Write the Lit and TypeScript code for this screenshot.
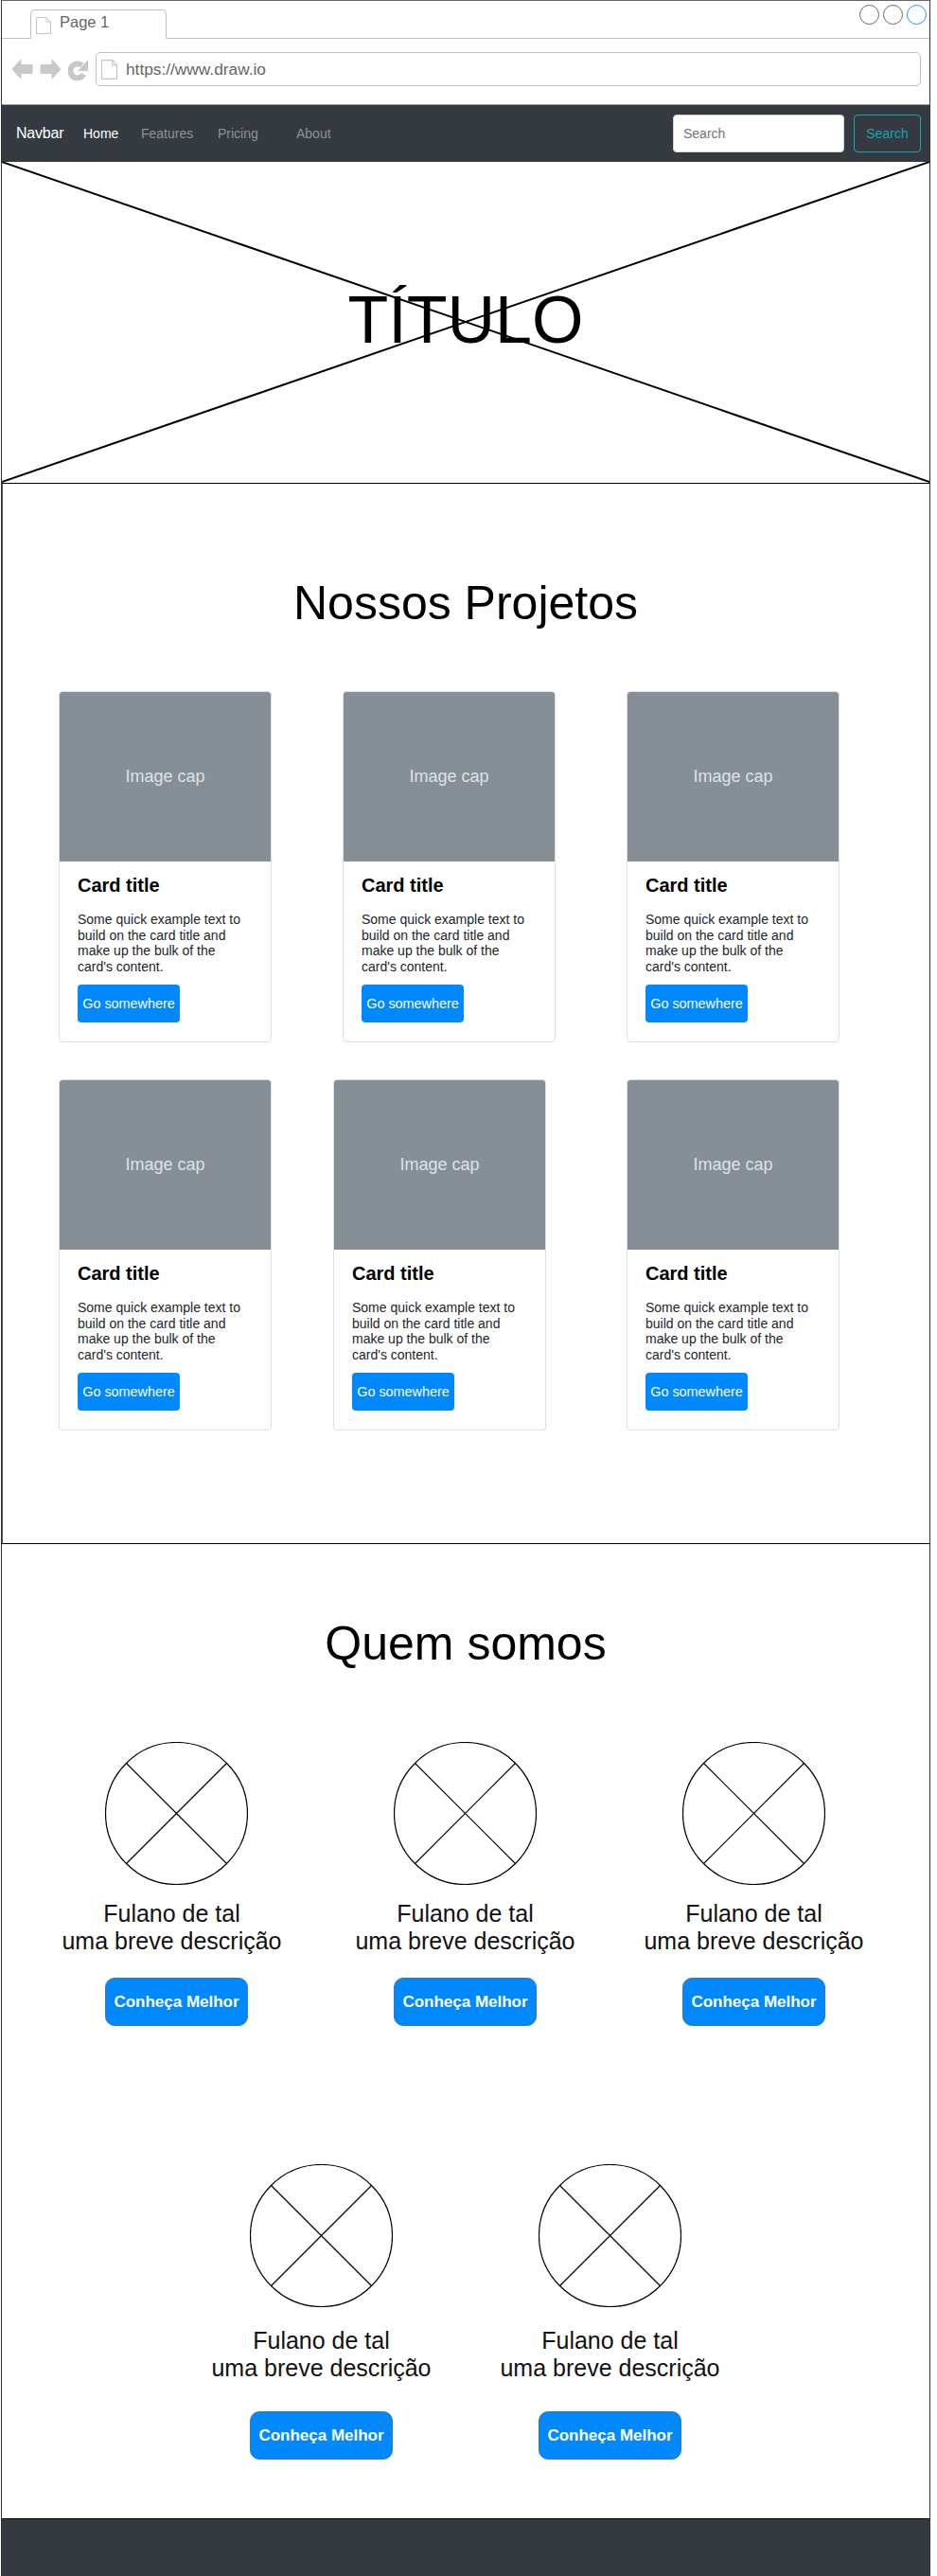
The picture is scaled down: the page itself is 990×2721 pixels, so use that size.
import { LitElement, html, css, svg } from 'lit';
import { customElement } from 'lit/decorators.js';

const docIcon = (w: number, h: number) => svg`
  <svg class="doc" width=${w} height=${h} viewBox="0 0 16 18" fill="#fff" stroke="#c4c4c4" stroke-width="1" preserveAspectRatio="none">
    <path d="M.5.5h10.5l4.500 4.500v12.500h-15z" />
    <path d="M11 .5v4.500h4.500" fill="none" />
  </svg>`;

@customElement('app-root')
export class AppRoot extends LitElement {
  static styles = css`
    :host {
      display: block;
      width: 990px;
      height: 2721px;
      background: #fff;
      font-family: 'Liberation Sans', Arial, sans-serif;
      color: #000;
    }
    .frame {
      width: 982px;
      margin-left: 1px;
      box-sizing: border-box;
      border: 1px solid #333;
      border-bottom: none;
      border-top-color: #666;
    }

    /* browser chrome */
    .tabs {
      height: 40px;
      box-sizing: border-box;
      display: flex;
      justify-content: space-between;
      align-items: flex-start;
      border-bottom: 1px solid #c0c0c0;
      padding: 9px 3px 0 30px;
    }
    .tab {
      width: 144px;
      height: 31px;
      box-sizing: border-box;
      display: flex;
      align-items: center;
      gap: 9px;
      padding: 0 0 4px 5px;
      border: 1px solid #c0c0c0;
      border-bottom: 1px solid #fff;
      border-radius: 5px 5px 0 0;
      color: #666;
      font-size: 16.500px;
    }
    .tab .doc {
      margin-top: 7px;
    }
    .dots {
      display: flex;
      gap: 4px;
      margin-top: -5px;
    }
    .dot {
      width: 21px;
      height: 21px;
      box-sizing: border-box;
      border: 1px solid #666;
      border-radius: 50%;
    }
    .dot.active {
      border-color: #2a8fe8;
    }
    .address-row {
      height: 70px;
      box-sizing: border-box;
      display: flex;
      align-items: flex-start;
      padding: 14px 9px 0 10px;
      gap: 7px;
      border-bottom: 1px solid #999;
    }
    .nav-icons {
      display: flex;
      align-items: center;
      gap: 7px;
      height: 36px;
    }
    .address {
      flex: 1;
      height: 36px;
      box-sizing: border-box;
      display: flex;
      align-items: center;
      gap: 9px;
      padding-left: 5px;
      border: 1px solid #c0c0c0;
      border-radius: 5px;
      color: #666;
      font-size: 17.300px;
    }

    /* navbar */
    .navbar {
      height: 60px;
      box-sizing: border-box;
      background: #343a40;
      display: flex;
      align-items: center;
      padding: 0 9px 0 15px;
      font-size: 14px;
      color: #8f9296;
    }
    .brand {
      color: #fff;
      font-size: 16px;
      width: 71px;
      letter-spacing: -0.2px;
    }
    .link {
      display: block;
    }
    .home {
      color: #fff;
      width: 61px;
    }
    .features {
      width: 81px;
    }
    .pricing {
      width: 83px;
    }
    .search {
      margin-left: auto;
      display: flex;
      gap: 10px;
    }
    .search-input {
      width: 181px;
      height: 40px;
      box-sizing: border-box;
      background: #fff;
      border: 1px solid #ced4da;
      border-radius: 4px;
      color: #6c757d;
      font-size: 14px;
      display: flex;
      align-items: center;
      padding-left: 10px;
    }
    .search-btn {
      width: 71px;
      height: 40px;
      box-sizing: border-box;
      border: 1px solid #17a2b8;
      border-radius: 4px;
      color: #17a2b8;
      font-size: 14px;
      display: flex;
      align-items: center;
      justify-content: center;
    }

    /* hero */
    .hero {
      position: relative;
      height: 340px;
      box-sizing: border-box;
      border-bottom: 1px solid #000;
      display: flex;
      align-items: center;
      justify-content: center;
      font-size: 70px;
      padding-bottom: 6px;
    }
    .hero svg {
      position: absolute;
      inset: 0;
      width: 100%;
      height: 100%;
    }
    .hero span {
      position: relative;
    }

    /* projects */
    .projects {
      height: 1120px;
      box-sizing: border-box;
      border-bottom: 1px solid #000;
      box-shadow: inset 1px 0 0 #555;
      padding: 99px 0 0 60px;
    }
    h2 {
      margin: 0;
      font-weight: 400;
      font-size: 50px;
      line-height: 55px;
      text-align: center;
    }
    .projects h2 {
      margin: 0 0 65px -60px;
    }
    .card-row {
      display: flex;
      margin-bottom: 39px;
    }
    .card-row.first {
      gap: 75px;
    }
    .card-row.second .card:nth-child(2) {
      margin: 0 85px 0 65px;
    }
    .card {
      width: 225px;
      height: 371px;
      box-sizing: border-box;
      border: 1px solid #dfdfdf;
      border-radius: 4px;
      overflow: hidden;
    }
    .cap {
      height: 179px;
      background: #868e96;
      color: #dee2e6;
      font-size: 18px;
      display: flex;
      align-items: center;
      justify-content: center;
    }
    .card-body {
      padding: 14px 19px 0;
    }
    .card-title {
      font-size: 20px;
      font-weight: 700;
      line-height: 23px;
      margin-bottom: 16px;
    }
    .card-text {
      font-size: 14px;
      line-height: 16.500px;
      color: #212529;
      margin-bottom: 11px;
    }
    .go {
      width: 108px;
      height: 40px;
      background: #0088ff;
      color: #fff;
      border-radius: 4px;
      font-size: 14.400px;
      display: flex;
      align-items: center;
      justify-content: center;
    }

    /* team */
    .team {
      height: 1030px;
      box-sizing: border-box;
      padding-top: 78px;
      border-bottom: 1px solid #000;
    }
    .team h2 {
      margin-bottom: 76px;
    }
    .person-row {
      display: grid;
      grid-template-columns: repeat(3, 151px);
      column-gap: 154px;
      padding-left: 109px;
      height: 446px;
    }
    .person-row.second {
      grid-template-columns: repeat(2, 151px);
      padding-left: 262px;
    }
    .person {
      display: flex;
      flex-direction: column;
      align-items: center;
    }
    .avatar {
      width: 151px;
      height: 151px;
      display: block;
    }
    .person-text {
      margin-top: 16px;
      width: 260px;
      font-size: 25px;
      line-height: 29px;
      text-align: center;
      color: #111;
      white-space: nowrap;
    }
    .person-row.first .person:first-child .person-text {
      margin-left: -10px;
    }
    .person-row.second .person-text {
      margin-top: 21px;
    }
    .more {
      margin-top: 24px;
      width: 151px;
      height: 51px;
      box-sizing: border-box;
      background: #0088ff;
      border: 1px solid #3a78b0;
      border-radius: 10px;
      color: #fff;
      font-size: 17px;
      font-weight: 700;
      display: flex;
      align-items: center;
      justify-content: center;
    }
    .person-row.second .more {
      margin-top: 31px;
    }

    .footer {
      height: 60px;
      background: #343a40;
    }
  `;

  private renderCard() {
    return html`
      <div class="card">
        <div class="cap">Image cap</div>
        <div class="card-body">
          <div class="card-title">Card title</div>
          <div class="card-text">
            Some quick example text to<br />build on the card title and<br />make up the bulk of the<br />card's content.
          </div>
          <div class="go">Go somewhere</div>
        </div>
      </div>
    `;
  }

  private renderPerson() {
    return html`
      <div class="person">
        <svg class="avatar" viewBox="0 0 151 151" fill="none" stroke="#000" stroke-width="1.200">
          <circle cx="75.500" cy="75.500" r="75" fill="#fff" />
          <path d="M22.500 22.500 128.500 128.500M128.500 22.500 22.500 128.500" />
        </svg>
        <div class="person-text">Fulano de tal<br />uma breve descrição</div>
        <div class="more">Conheça Melhor</div>
      </div>
    `;
  }

  render() {
    return html`
      <div class="frame">
        <div class="tabs">
          <div class="tab">${docIcon(16, 18)}Page 1</div>
          <div class="dots">
            <div class="dot"></div>
            <div class="dot"></div>
            <div class="dot active"></div>
          </div>
        </div>
        <div class="address-row">
          <div class="nav-icons">
            <svg width="23" height="24" viewBox="0 0 23 24" fill="#c8c8c8" stroke="#c8c8c8" stroke-width="1" stroke-linejoin="round">
              <path d="M1 12 10 2v5.500h12v9H10v5.500z" />
            </svg>
            <svg width="23" height="24" viewBox="0 0 23 24" fill="#c8c8c8" stroke="#c8c8c8" stroke-width="1" stroke-linejoin="round">
              <path d="M22 12 13 2v5.500H1v9h12v5.500z" />
            </svg>
            <svg width="22" height="24" viewBox="0 0 22 24" fill="none">
              <path d="M16.500 17.500A7.500 7.500 0 1 1 14.500 8" stroke="#c8c8c8" stroke-width="6" />
              <path d="M21 2v12H10z" fill="#c8c8c8" />
            </svg>
          </div>
          <div class="address">${docIcon(17, 21)}https://www.draw.io</div>
        </div>
        <nav class="navbar">
          <span class="brand">Navbar</span>
          <span class="link home">Home</span>
          <span class="link features">Features</span>
          <span class="link pricing">Pricing</span>
          <span class="link">About</span>
          <div class="search">
            <div class="search-input">Search</div>
            <div class="search-btn">Search</div>
          </div>
        </nav>
        <section class="hero">
          <svg viewBox="0 0 980 340" preserveAspectRatio="none" stroke="#000" stroke-width="2">
            <path d="M0 0 980 339M980 0 0 339" />
          </svg>
          <span>TÍTULO</span>
        </section>
        <section class="projects">
          <h2>Nossos Projetos</h2>
          <div class="card-row first">${this.renderCard()}${this.renderCard()}${this.renderCard()}</div>
          <div class="card-row second">${this.renderCard()}${this.renderCard()}${this.renderCard()}</div>
        </section>
        <section class="team">
          <h2>Quem somos</h2>
          <div class="person-row first">${this.renderPerson()}${this.renderPerson()}${this.renderPerson()}</div>
          <div class="person-row second">${this.renderPerson()}${this.renderPerson()}</div>
        </section>
        <footer class="footer"></footer>
      </div>
    `;
  }
}

declare global {
  interface HTMLElementTagNameMap {
    'app-root': AppRoot;
  }
}
